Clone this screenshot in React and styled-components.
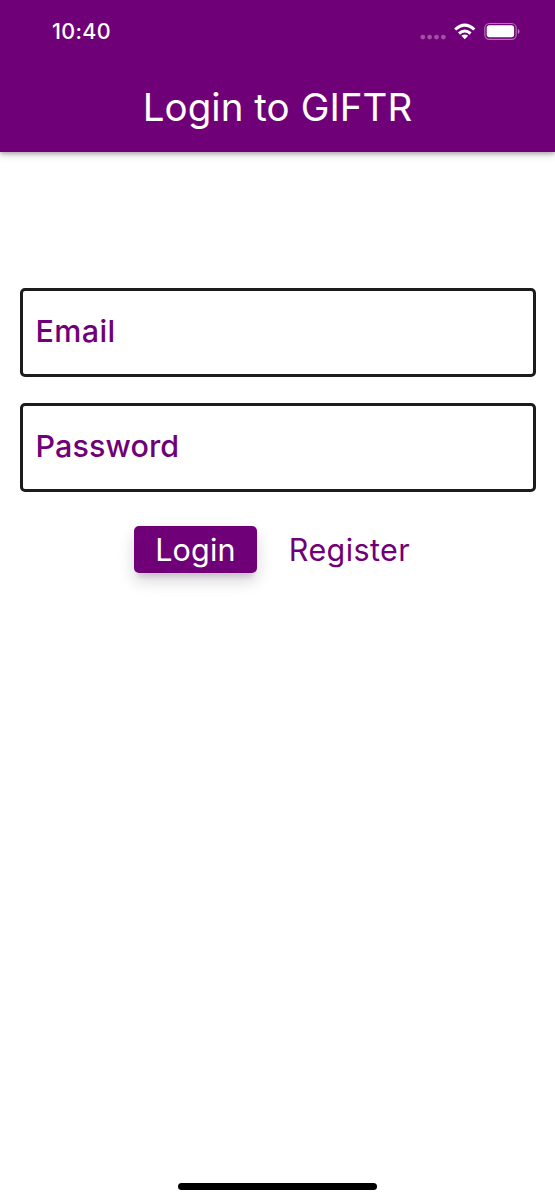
import React from "react";
import styled, { createGlobalStyle } from "styled-components";

const purple = "#700077";

const GlobalStyle = createGlobalStyle`
  * { box-sizing: border-box; }
  body { margin: 0; background: #fff; }
`;

const Screen = styled.div`
  display: flex;
  flex-direction: column;
  width: 555px;
  height: 1200px;
  overflow: hidden;
  background: #fff;
  color: ${purple};
  font-family: Inter, "Liberation Sans", sans-serif;
`;

const Header = styled.header`
  height: 152px;
  flex: none;
  background: ${purple};
  color: #fff;
  box-shadow: 0 2px 4px rgba(0, 0, 0, 0.26), 0 4px 8px rgba(0, 0, 0, 0.1);
`;

const StatusBar = styled.div`
  display: flex;
  align-items: center;
  justify-content: space-between;
  height: 62px;
  padding: 0 35px 0 52px;
`;

const Time = styled.time`
  font-size: 21.5px;
  font-weight: 500;
  letter-spacing: 0.3px;
`;

const Title = styled.h1`
  margin: 0;
  height: 90px;
  line-height: 90px;
  text-align: center;
  font-size: 38.5px;
  font-weight: 400;
  letter-spacing: 0.05px;
`;

const Form = styled.form`
  display: flex;
  flex-direction: column;
  gap: 26px;
  padding: 136px 19px 0 20px;
`;

const Field = styled.label`
  display: flex;
  align-items: center;
  height: 89px;
  padding: 0 12.5px 4px;
  border: 3px solid #1c1b1d;
  border-radius: 5px;
  font-size: 30.5px;
  font-weight: 500;
  letter-spacing: ${(p) => p.$spacing};
`;

const Actions = styled.div`
  display: flex;
  gap: 16px;
  margin-top: 8px;
  padding-left: 114px;
`;

const Button = styled.button`
  width: ${(p) => (p.$filled ? "123px" : "153px")};
  height: 47px;
  padding: 0;
  border: 0;
  border-radius: 5px;
  font: 400 30.5px Inter, "Liberation Sans", sans-serif;
  letter-spacing: ${(p) => (p.$filled ? "0.2px" : "0.4px")};
  color: ${(p) => (p.$filled ? "#fff" : purple)};
  background: ${(p) => (p.$filled ? purple : "transparent")};
  box-shadow: ${(p) =>
    p.$filled
      ? "0 8px 4px -4px rgba(0,0,0,.1), 0 8px 14px rgba(30,0,30,.1), 0 8px 20px rgba(60,0,60,.07)"
      : "none"};
`;

const HomeIndicator = styled.div`
  width: 199px;
  height: 7px;
  margin: auto auto 10px;
  border-radius: 4px;
  background: #000;
`;

function StatusIcons() {
  return (
    <svg width="100" height="24" viewBox="420 19 100 24" fill="#fff">
      <g opacity="0.32">
        <circle cx="422.8" cy="37.1" r="2.4" />
        <circle cx="429.6" cy="37.1" r="2.4" />
        <circle cx="436.5" cy="37.1" r="2.4" />
        <circle cx="443.3" cy="37.1" r="2.4" />
      </g>
      <path d="M464.8 39.2L461.4 35.8Q464.8 33 468.2 35.8Z" />
      <g fill="none" stroke="#fff" strokeWidth="3">
        <path d="M459 33.5Q464.8 28.6 470.6 33.5" />
        <path d="M455.2 29.5Q464.8 20.8 474.4 29.5" />
      </g>
      <rect x="484.8" y="23.5" width="31.4" height="15.8" rx="4.6" fill="none" stroke="#fff" strokeOpacity="0.45" strokeWidth="1.2" />
      <rect x="486.7" y="25.3" width="27.4" height="12" rx="2.7" />
      <path d="M517.8 28.8Q519.6 29.8 519.6 31.4T517.8 34Z" opacity="0.5" />
    </svg>
  );
}

export default function App() {
  return (
    <Screen>
      <GlobalStyle />
      <Header>
        <StatusBar>
          <Time>10:40</Time>
          <StatusIcons />
        </StatusBar>
        <Title>Login to GIFTR</Title>
      </Header>
      <Form>
        <Field $spacing="0.4px">Email</Field>
        <Field $spacing="0.1px">Password</Field>
        <Actions>
          <Button type="button" $filled>Login</Button>
          <Button type="button">Register</Button>
        </Actions>
      </Form>
      <HomeIndicator />
    </Screen>
  );
}
